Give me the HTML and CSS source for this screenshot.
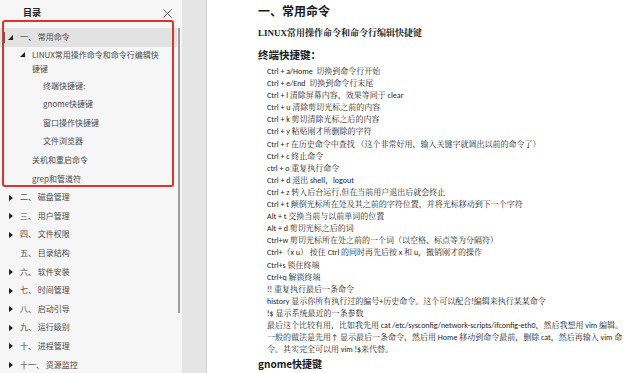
FILE: index.html
```html
<!DOCTYPE html>
<html lang="zh-CN">
<head>
<meta charset="utf-8">
<title>目录 - 常用命令</title>
<link rel="stylesheet" href="styles.css">
</head>
<body>
<div class="app">
  <aside class="sidebar">
    <div class="side-head">
      <span class="side-title">目录</span>
      <svg class="close" width="9" height="9" viewBox="0 0 9 9"><path d="M0.5 0.5L8.5 8.5M8.5 0.5L0.5 8.5" stroke="#555" stroke-width="1" fill="none"/></svg>
    </div>
    <div class="side-body">
      <div class="toc">
        <div class="mark-group">
          <div class="row l1 active"><span class="tw"><svg class="ic-exp" width="5" height="5" viewBox="0 0 5 5"><path d="M5 0V5H0Z"/></svg></span><span class="tt">一、 常用命令</span></div>
          <div class="row l2 wrap"><span class="tw"><svg class="ic-exp" width="5" height="5" viewBox="0 0 5 5"><path d="M5 0V5H0Z"/></svg></span><span class="tt">LINUX常用操作命令和命令行编辑快捷键</span></div>
          <div class="row l3"><span class="tw"></span><span class="tt">终端快捷键:</span></div>
          <div class="row l3"><span class="tw"></span><span class="tt">gnome快捷键</span></div>
          <div class="row l3"><span class="tw"></span><span class="tt">窗口操作快捷键</span></div>
          <div class="row l3"><span class="tw"></span><span class="tt">文件浏览器</span></div>
          <div class="row l2"><span class="tw"></span><span class="tt">关机和重启命令</span></div>
          <div class="row l2"><span class="tw"></span><span class="tt">grep和管道符</span></div>
        </div>
        <div class="row l1"><span class="tw"><svg class="ic-col" width="4" height="6" viewBox="0 0 4 6"><path d="M0 0L4 3L0 6Z"/></svg></span><span class="tt">二、 磁盘管理</span></div>
        <div class="row l1"><span class="tw"><svg class="ic-col" width="4" height="6" viewBox="0 0 4 6"><path d="M0 0L4 3L0 6Z"/></svg></span><span class="tt">三、 用户管理</span></div>
        <div class="row l1"><span class="tw"><svg class="ic-col" width="4" height="6" viewBox="0 0 4 6"><path d="M0 0L4 3L0 6Z"/></svg></span><span class="tt">四、 文件权限</span></div>
        <div class="row l1"><span class="tw"></span><span class="tt">五、 目录结构</span></div>
        <div class="row l1"><span class="tw"><svg class="ic-col" width="4" height="6" viewBox="0 0 4 6"><path d="M0 0L4 3L0 6Z"/></svg></span><span class="tt">六、 软件安装</span></div>
        <div class="row l1"><span class="tw"><svg class="ic-col" width="4" height="6" viewBox="0 0 4 6"><path d="M0 0L4 3L0 6Z"/></svg></span><span class="tt">七、 时间管理</span></div>
        <div class="row l1"><span class="tw"><svg class="ic-col" width="4" height="6" viewBox="0 0 4 6"><path d="M0 0L4 3L0 6Z"/></svg></span><span class="tt">八、 启动引导</span></div>
        <div class="row l1"><span class="tw"><svg class="ic-col" width="4" height="6" viewBox="0 0 4 6"><path d="M0 0L4 3L0 6Z"/></svg></span><span class="tt">九、 运行级别</span></div>
        <div class="row l1"><span class="tw"><svg class="ic-col" width="4" height="6" viewBox="0 0 4 6"><path d="M0 0L4 3L0 6Z"/></svg></span><span class="tt">十、 进程管理</span></div>
        <div class="row l1"><span class="tw"><svg class="ic-col" width="4" height="6" viewBox="0 0 4 6"><path d="M0 0L4 3L0 6Z"/></svg></span><span class="tt">十一、 资源监控</span></div>
      </div>
      <div class="track"><div class="thumb"></div></div>
    </div>
  </aside>
  <div class="gutter"></div>
  <main class="page">
    <h1 class="h1">一、常用命令</h1>
    <h2 class="h2">LINUX常用操作命令和命令行编辑快捷键</h2>
    <h3 class="h3">终端快捷键：</h3>
    <div class="lines">
      <p>Ctrl + a/Home&nbsp; 切换到命令行开始</p>
      <p>Ctrl + e/End&nbsp; 切换到命令行末尾</p>
      <p>Ctrl + l 清除屏幕内容，效果等同于 clear</p>
      <p>Ctrl + u 清除剪切光标之前的内容</p>
      <p>Ctrl + k 剪切清除光标之后的内容</p>
      <p>Ctrl + y 粘贴刚才所删除的字符</p>
      <p>Ctrl + r 在历史命令中查找 （这个非常好用，输入关键字就调出以前的命令了）</p>
      <p>Ctrl + c 终止命令</p>
      <p>ctrl + o 重复执行命令</p>
      <p>Ctrl + d 退出 shell，logout</p>
      <p>Ctrl + z 转入后台运行,但在当前用户退出后就会终止</p>
      <p>Ctrl + t 颠倒光标所在处及其之前的字符位置，并将光标移动到下一个字符</p>
      <p>Alt + t 交换当前与以前单词的位置</p>
      <p>Alt + d 剪切光标之后的词</p>
      <p>Ctrl+w 剪切光标所在处之前的一个词（以空格、标点等为分隔符）</p>
      <p>Ctrl+（x u） 按住 Ctrl 的同时再先后按 x 和 u，撤销刚才的操作</p>
      <p>Ctrl+s 锁住终端</p>
      <p>Ctrl+q 解锁终端</p>
      <p>!! 重复执行最后一条命令</p>
      <p>history 显示你所有执行过的编号+历史命令。这个可以配合!编辑来执行某某命令</p>
      <p>!$ 显示系统最近的一条参数</p>
      <p>最后这个比较有用，比如我先用 cat /etc/sysconfig/network-scripts/ifconfig-eth0，然后我想用 vim 编辑。<br>一般的做法是先用↑ 显示最后一条命令，然后用 Home 移动到命令最前，删除 cat，然后再输入 vim 命<br>令。其实完全可以用 vim !$来代替。</p>
    </div>
    <h3 class="h3 gnome">gnome快捷键</h3>
  </main>
</div>
</body>
</html>
```

FILE: styles.css
```css
html, body {
  margin: 0;
  padding: 0;
}
body {
  width: 640px;
  height: 373px;
  overflow: hidden;
  background: #fff;
}
.app {
  display: flex;
  height: 373px;
  overflow: hidden;
}

/* ---------- sidebar ---------- */
.sidebar {
  width: 182px;
  flex: none;
  background: #f6f6f6;
  display: flex;
  flex-direction: column;
  font-family: "Noto Sans CJK SC", sans-serif;
}
.side-head {
  height: 26px;
  padding: 0 10px 2px 23px;
  display: flex;
  align-items: center;
  justify-content: space-between;
}
.side-title {
  font-size: 9px;
  font-weight: 700;
  color: #222;
  line-height: 12px;
}
.close {
  display: block;
}
.side-body {
  flex: 1;
  display: flex;
  min-height: 0;
}
.toc {
  width: 177px;
  flex: none;
  font-size: 8px;
  color: #4a4a4a;
}
.mark-group {
  position: relative;
}
.mark-group::after {
  content: "";
  position: absolute;
  top: -8.5px;
  left: 2px;
  right: 3.5px;
  bottom: 1px;
  border: 2px solid #e0322c;
  border-radius: 3px;
  pointer-events: none;
}
.row {
  display: flex;
  align-items: flex-start;
  line-height: 18.6px;
  padding-right: 14px;
  position: relative;
}
.row.l1 { padding-left: 7px; }
.row.l2 { padding-left: 19px; }
.row.l3 { padding-left: 30px; }
.row.wrap {
  line-height: 14px;
  padding-top: 1.4px;
  padding-bottom: 0.7px;
}
.row.active {
  background: #e2e2e2;
}
.row.active::before {
  content: "";
  position: absolute;
  left: 3px;
  top: 4px;
  width: 2px;
  height: 11px;
  background: #555;
}
.tw {
  width: 13px;
  height: 18.6px;
  flex: none;
  display: flex;
  align-items: center;
}
.row.wrap .tw {
  height: 14px;
}
.tw svg {
  display: block;
  fill: #1e1e1e;
}
.ic-exp { margin-left: 1px; }
.ic-col { margin-left: 2px; }
.tt {
  flex: 1;
  min-width: 0;
}
.track {
  flex: none;
  width: 5px;
  padding-left: 1px;
}
.thumb {
  width: 2px;
  height: 285px;
  background: #9c9c9c;
}

/* ---------- gutter ---------- */
.gutter {
  width: 24px;
  flex: none;
  background: #e5e5e5;
  border-right: 1px solid #cfcfcf;
}

/* ---------- page ---------- */
.page {
  flex: 1;
  min-width: 0;
  background: #fff;
  padding: 3px 0 0 51px;
  overflow: hidden;
  white-space: nowrap;
  color: #1a1a1a;
}
.h1 {
  margin: 0;
  font-family: "Noto Sans CJK SC", sans-serif;
  font-size: 12px;
  font-weight: 700;
  line-height: 16px;
}
.h2 {
  margin: 7px 0 0;
  font-family: "Liberation Serif", "Noto Serif CJK SC", "Noto Sans CJK SC", serif;
  font-size: 9px;
  font-weight: 700;
  line-height: 14px;
}
.h3 {
  margin: 8px 0 0;
  font-family: "Noto Sans CJK SC", sans-serif;
  font-size: 10.5px;
  font-weight: 700;
  line-height: 14px;
}
.h3.gnome {
  margin-top: 2px;
  font-size: 10px;
}
.lines {
  margin: 3px 0 0 9px;
  font-family: "Carlito", "Lato", "Noto Serif CJK SC", "Noto Sans CJK SC", sans-serif;
  font-size: 8px;
  line-height: 12.1px;
  color: #222;
}
.lines p {
  margin: 0;
}
```
